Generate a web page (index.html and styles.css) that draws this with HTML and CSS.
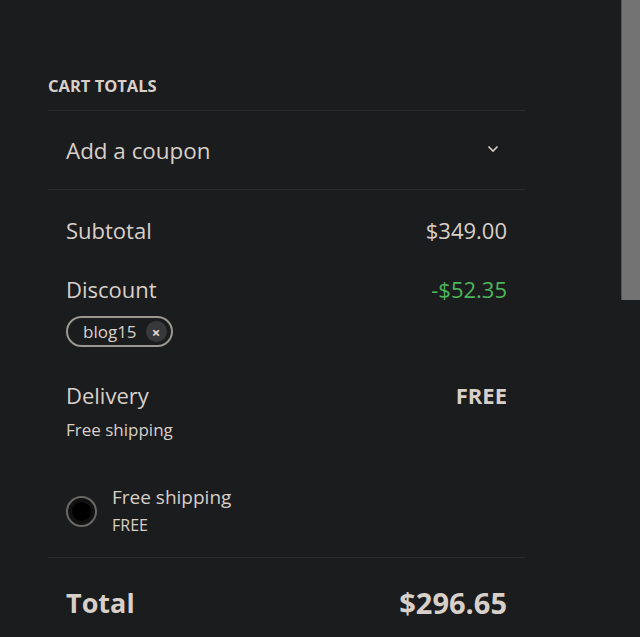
FILE: index.html
```html
<!DOCTYPE html>
<html>
    <head>
        <link rel="stylesheet" href="styles.css">
    </head>
    <body>
        <div class="scrollbar"></div>
        <div class="totals">
            <h2>CART TOTALS</h2>
            <div class="coupon">
                <span>Add a coupon</span>
                <svg class="chevron" width="12" height="8" viewBox="0 0 12 8"><path d="M1.5 1.5 L6 6 L10.5 1.5" fill="none" stroke="#d8d0c8" stroke-width="1.6"/></svg>
            </div>
            <div class="items">
                <div class="row">
                    <span>Subtotal</span>
                    <span>$349.00</span>
                </div>
                <div class="row discount">
                    <span>Discount</span>
                    <span class="green">-$52.35</span>
                </div>
                <div class="chip">blog15 <span class="remove">×</span></div>
                <div class="row delivery">
                    <span>Delivery</span>
                    <b>FREE</b>
                </div>
                <div class="note">Free shipping</div>
                <div class="option">
                    <span class="radio"><span class="dot"></span></span>
                    <div class="option-text">
                        <div class="option-name">Free shipping</div>
                        <div class="option-price">FREE</div>
                    </div>
                </div>
            </div>
            <div class="row total">
                <span class="label">Total</span>
                <span class="price">$296.65</span>
            </div>
        </div>
    </body>
</html>
```

FILE: styles.css
```css
* { margin: 0; padding: 0; box-sizing: border-box; font-family: "Open Sans", sans-serif; color: #d8d0c8; }
html, body { width: 100%; height: 100%; background: #1b1c1e; overflow: hidden; }
body { padding: 74px 0 0 48px; }

.scrollbar { position: absolute; top: 0; right: 0; width: 19px; height: 300px; background: #737373; border-left: 1px solid #555; }

.totals { width: 477px; }
.totals h2 { font-size: 16.5px; line-height: 24px; font-weight: 700; padding-bottom: 12px; border-bottom: 1px solid #2a2b2d; }

.coupon { display: flex; justify-content: space-between; align-items: center; height: 79px; padding: 0 26px 0 18px; border-bottom: 1px solid #2a2b2d; }
.coupon span { font-size: 22.4px; margin-top: 1px; }
.coupon .chevron { margin-top: -3px; }

.items { padding: 25px 18px 21px 18px; border-bottom: 1px solid #2a2b2d; }
.row { display: flex; justify-content: space-between; align-items: center; height: 30px; }
.row span, .row b { font-size: 22px; line-height: 30px; }
.row .green { color: #4cb55a; }
.discount { margin-top: 29px; }

.chip { display: inline-flex; align-items: center; gap: 9px; margin-top: 12px; height: 31px; padding: 0 4px 0 15px; border: 2px solid #9a9690; border-radius: 16px; font-size: 17px; }
.chip .remove { display: inline-flex; align-items: center; justify-content: center; width: 21px; height: 21px; border-radius: 50%; background: #38393b; font-size: 15px; font-weight: 700; color: #e0dcd6; }

.delivery { margin-top: 33px; }
.delivery b { font-weight: 700; }
.note { font-size: 17px; line-height: 22px; margin-top: 9px; }

.option { display: flex; align-items: flex-start; gap: 15px; margin-top: 42px; }
.radio { display: flex; align-items: center; justify-content: center; flex: none; width: 31px; height: 31px; margin-top: 13px; border-radius: 50%; border: 2px solid #6a6865; background: #111; }
.radio .dot { width: 19px; height: 19px; border-radius: 50%; background: #000; }
.option-name { font-size: 19px; line-height: 28px; }
.option-price { font-size: 16px; line-height: 22px; margin-top: 3px; }

.total { height: auto; padding: 27px 18px 0 18px; }
.total span { line-height: 36px; font-weight: 700; }
.total .label { font-size: 27px; }
.total .price { font-size: 29px; }
```
